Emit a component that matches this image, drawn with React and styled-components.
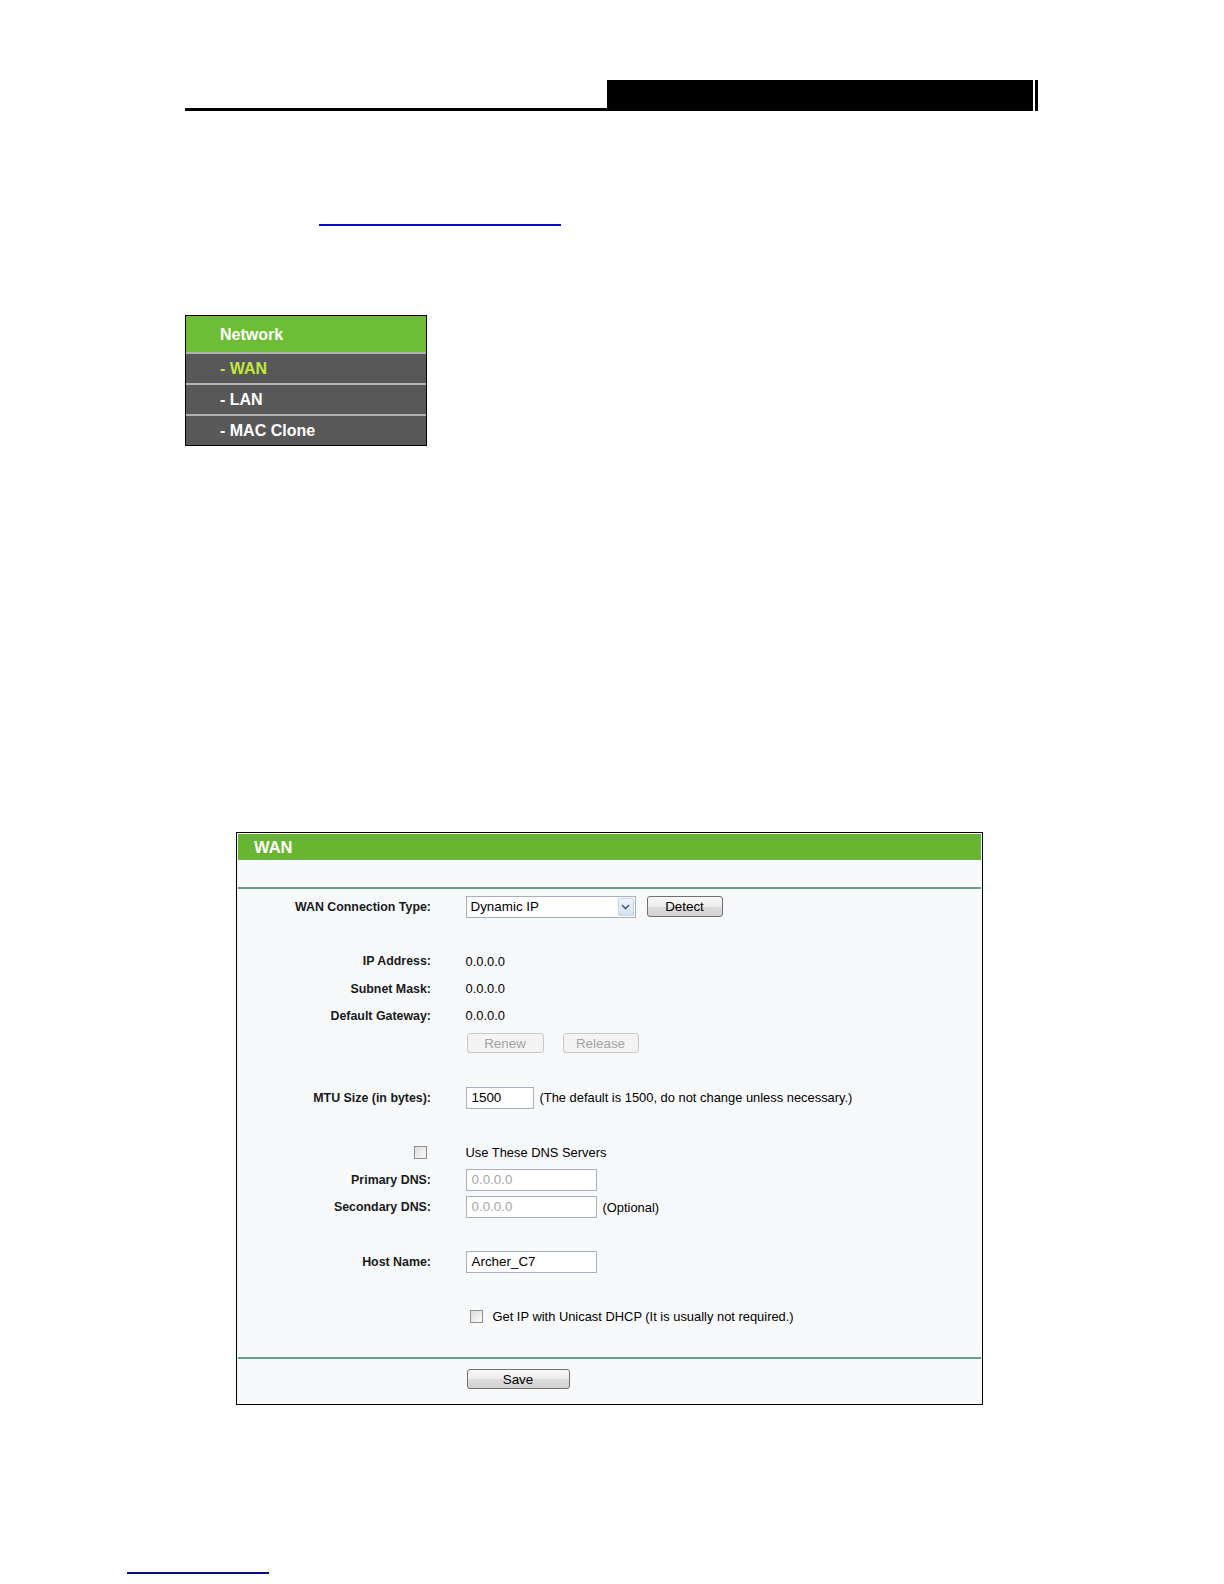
import styled, { createGlobalStyle } from "styled-components"

const Global = createGlobalStyle`
  html, body {
    margin: 0;
    background: #fff;
    font-family: "Liberation Sans", Arial, sans-serif;
  }
`

const Page = styled.div`
  width: 1224px;
  height: 1584px;
  overflow: hidden;
  display: flex;
  flex-direction: column;
  align-items: flex-start;
`

const HeaderRule = styled.div`
  margin: 80px 0 0 185px;
  width: 853px;
  display: flex;
  align-items: flex-end;
`
const HeaderLine = styled.div`
  flex: 1;
  border-bottom: 3px solid #000;
`
const HeaderBox = styled.div`
  width: 431px;
  height: 31px;
  background: linear-gradient(to right, #000 calc(100% - 5px), #fff calc(100% - 5px), #fff calc(100% - 3px), #000 calc(100% - 3px));
`

const LinkLine = styled.div`
  margin: ${(p) => p.$top}px 0 0 ${(p) => p.$left}px;
  width: ${(p) => p.$width}px;
  height: 2px;
  background: ${(p) => p.$color};
`

const Menu = styled.div`
  margin: 89px 0 0 185px;
  width: 240px;
  border: 1px solid #000;
  background: #585858;
`
const MenuHead = styled.div`
  height: 36px;
  line-height: 37px;
  padding-left: 34px;
  background: #6dbd36;
  color: #fff;
  font-weight: bold;
  font-size: 16px;
`
const MenuItem = styled.div`
  height: 29px;
  line-height: 30px;
  padding-left: 34px;
  border-top: 2px solid #b3b3b3;
  color: ${(p) => (p.$active ? "#c3e63f" : "#fff")};
  font-weight: bold;
  font-size: 16px;
  &:first-of-type {
    border-top-color: #7a7a7a;
  }
`

const Panel = styled.div`
  margin: 386px 0 0 236px;
  width: 743px;
  border: 1px solid #000;
  padding: 1px;
  box-sizing: content-box;
  background: #f8f9fa;
  font-size: 12.9px;
  color: #000;
`
const PanelHead = styled.div`
  height: 26.3px;
  line-height: 26px;
  padding-left: 16px;
  background: #68b52f;
  color: #fff;
  font-weight: bold;
  font-size: 16.5px;
`
const Divider = styled.div`
  margin-top: ${(p) => p.$top}px;
  height: 2px;
  background: #6d9d88;
`
const Form = styled.div`
  padding: 4.5px 0 27px;
  display: flex;
  flex-direction: column;
`
const Row = styled.div`
  height: 27.3px;
  display: grid;
  grid-template-columns: 193px 1fr;
  column-gap: 34.5px;
  align-items: center;
`
const Label = styled.div`
  display: flex;
  justify-content: flex-end;
  align-items: center;
  font-weight: bold;
  font-size: 12.4px;
  color: #1a1a1a;
`
const Value = styled.div`
  display: flex;
  align-items: center;
`

const Select = styled.div`
  width: 164px;
  height: 20px;
  border: 1px solid #a7b0bd;
  background: #fff;
  display: flex;
  align-items: center;
  justify-content: space-between;
  padding-left: 4px;
  font-size: 13.4px;
`
const SelectArrow = styled.div`
  width: 16px;
  height: 18px;
  margin-right: 1px;
  border: 1px solid #c7d4e6;
  border-radius: 2px;
  background: linear-gradient(#f2f6fb, #d5e1f0);
  display: flex;
  align-items: center;
  justify-content: center;
  box-sizing: border-box;
`

const Button = styled.button`
  width: ${(p) => p.$width}px;
  height: 20.5px;
  padding: 0;
  margin-left: ${(p) => p.$ml || 0}px;
  border: 1px solid ${(p) => (p.disabled ? "#c9c9c9" : "#707070")};
  border-radius: 3px;
  background: ${(p) => (p.disabled ? "#f4f4f4" : "linear-gradient(#f8f8f8 0%, #ececec 50%, #dcdcdc 51%, #d2d2d2 100%)")};
  color: ${(p) => (p.disabled ? "#a3a3a3" : "#000")};
  font-family: "Liberation Sans", Arial, sans-serif;
  font-size: 13.4px;
`

const Input = styled.div`
  width: ${(p) => p.$width - 7}px;
  height: 20px;
  line-height: 20px;
  border: 1px solid #a9b1bc;
  background: #fff;
  padding-left: 5px;
  box-sizing: content-box;
  color: ${(p) => (p.$disabled ? "#a8a8a8" : "#000")};
  font-size: 13.4px;
  margin-right: ${(p) => p.$mr || 0}px;
`

const Check = styled.span`
  display: inline-block;
  width: 11px;
  height: 11px;
  border: 1px solid #8e8f8f;
  background: linear-gradient(135deg, #dcdcdc, #fbfbfb);
  margin-right: ${(p) => p.$mr || 0}px;
  margin-left: ${(p) => p.$ml || 0}px;
`

const Footer = styled.div`
  padding: 10px 0 13.5px;
  display: grid;
  grid-template-columns: 193px 1fr;
  column-gap: 35.5px;
`

const Blank = () => <Row />

const Arrow = () => (
  <svg width="9" height="6" viewBox="0 0 9 6">
    <path d="M1 1 L4.5 4.5 L8 1" fill="none" stroke="#4a5a78" strokeWidth="1.6" />
  </svg>
)

export default function App() {
  return (
    <Page>
      <Global />
      <HeaderRule>
        <HeaderLine />
        <HeaderBox />
      </HeaderRule>
      <LinkLine $top={113} $left={319} $width={242} $color="#0b0bcf" />

      <Menu>
        <MenuHead>Network</MenuHead>
        <MenuItem $active>- WAN</MenuItem>
        <MenuItem>- LAN</MenuItem>
        <MenuItem>- MAC Clone</MenuItem>
      </Menu>

      <Panel>
        <PanelHead>WAN</PanelHead>
        <Divider $top={26.3} />
        <Form>
          <Row>
            <Label>WAN Connection Type:</Label>
            <Value>
              <Select>
                Dynamic IP
                <SelectArrow><Arrow /></SelectArrow>
              </Select>
              <Button $width={76} $ml={11}>Detect</Button>
            </Value>
          </Row>
          <Blank />
          <Row>
            <Label>IP Address:</Label>
            <Value>0.0.0.0</Value>
          </Row>
          <Row>
            <Label>Subnet Mask:</Label>
            <Value>0.0.0.0</Value>
          </Row>
          <Row>
            <Label>Default Gateway:</Label>
            <Value>0.0.0.0</Value>
          </Row>
          <Row>
            <Label />
            <Value>
              <Button $width={77} $ml={1} disabled>Renew</Button>
              <Button $width={76} $ml={19} disabled>Release</Button>
            </Value>
          </Row>
          <Blank />
          <Row>
            <Label>MTU Size (in bytes):</Label>
            <Value>
              <Input $width={68} $mr={6}>1500</Input>
              (The default is 1500, do not change unless necessary.)
            </Value>
          </Row>
          <Blank />
          <Row>
            <Label><Check $mr={4} /></Label>
            <Value>Use These DNS Servers</Value>
          </Row>
          <Row>
            <Label>Primary DNS:</Label>
            <Value>
              <Input $width={131} $disabled>0.0.0.0</Input>
            </Value>
          </Row>
          <Row>
            <Label>Secondary DNS:</Label>
            <Value>
              <Input $width={131} $mr={6} $disabled>0.0.0.0</Input>
              (Optional)
            </Value>
          </Row>
          <Blank />
          <Row>
            <Label>Host Name:</Label>
            <Value>
              <Input $width={131}>Archer_C7</Input>
            </Value>
          </Row>
          <Blank />
          <Row>
            <Label />
            <Value>
              <Check $ml={4} $mr={10} />
              Get IP with Unicast DHCP (It is usually not required.)
            </Value>
          </Row>
        </Form>
        <Divider $top={0} />
        <Footer>
          <span />
          <Button $width={103}>Save</Button>
        </Footer>
      </Panel>

      <LinkLine $top={167} $left={127} $width={142} $color="#0c0c80" />
    </Page>
  )
}
